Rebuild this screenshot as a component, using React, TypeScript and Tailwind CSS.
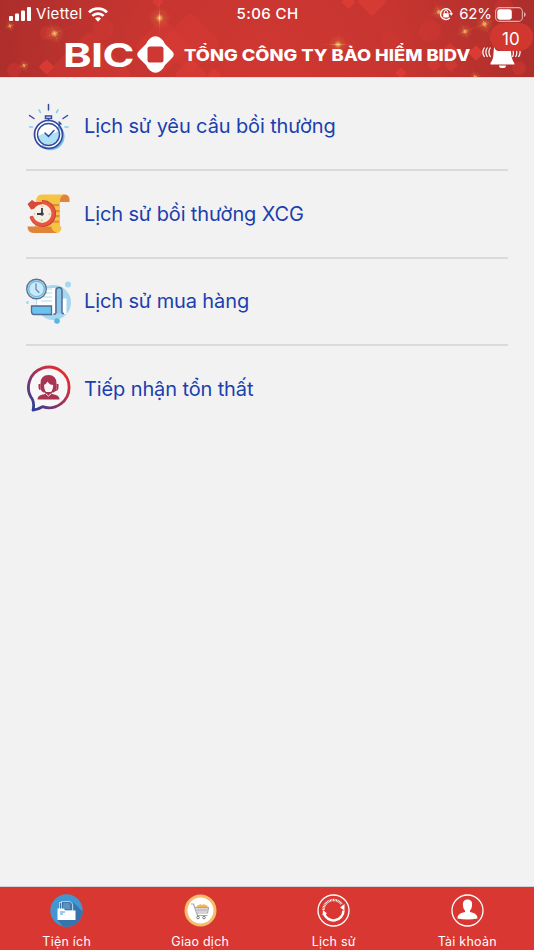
import type { ReactNode } from 'react';

const sparkles = [
  { x: 10, y: 26, r: 10 },
  { x: 54.5, y: 33.5, r: 20 },
  { x: 159.5, y: 18, r: 22 },
  { x: 24, y: 65.5, r: 11 },
  { x: 338, y: 44.5, r: 20 },
  { x: 465, y: 31.5, r: 15 },
  { x: 484.5, y: 24, r: 18 },
  { x: 439, y: 12, r: 15 },
  { x: 475, y: 77, r: 11 },
];

const HeaderBackground = () => (
  <svg className="absolute inset-0 h-full w-full" viewBox="0 0 534 77" preserveAspectRatio="none">
    <defs>
      <radialGradient id="bg" gradientUnits="userSpaceOnUse" cx="267" cy="75" r="290">
        <stop offset="0" stopColor="#d03732" />
        <stop offset="0.5" stopColor="#c63530" />
        <stop offset="1" stopColor="#a92d2b" />
      </radialGradient>
      <radialGradient id="glow">
        <stop offset="0" stopColor="#ffe9a0" />
        <stop offset="0.13" stopColor="#f0b660" stopOpacity="0.85" />
        <stop offset="0.4" stopColor="#d9713f" stopOpacity="0.3" />
        <stop offset="1" stopColor="#d9713f" stopOpacity="0" />
      </radialGradient>
    </defs>
    <rect width="534" height="77" fill="url(#bg)" />
    <g fill="#de3d36">
      <rect x="-31" y="-31" width="62" height="62" rx="6" opacity="0.35" transform="translate(89 74) rotate(45)" />
      <rect x="-22" y="-22" width="44" height="44" rx="5" opacity="0.35" transform="translate(190 43) rotate(45)" />
      <rect x="-20" y="-20" width="40" height="40" rx="4" opacity="0.35" transform="translate(163 46) rotate(45)" />
      <rect x="-12" y="-12" width="24" height="24" rx="4" opacity="0.5" transform="translate(191 75) rotate(45)" />
      <rect x="-5" y="-5" width="10" height="10" rx="1" opacity="0.7" transform="translate(214 75) rotate(45)" />
      <rect x="-5.5" y="-5.5" width="11" height="11" rx="1" opacity="0.8" transform="translate(46.5 67) rotate(45)" />
      <rect x="-4" y="-4" width="8" height="8" rx="1" opacity="0.7" transform="translate(158 2) rotate(45)" />
      <rect x="-5" y="-5" width="10" height="10" rx="1" opacity="0.8" transform="translate(348.5 2) rotate(45)" />
      <rect x="-11" y="-11" width="22" height="22" rx="3" opacity="0.6" transform="translate(372 1) rotate(45)" />
      <rect x="-5.5" y="-5.5" width="11" height="11" rx="1" opacity="0.9" transform="translate(476 53) rotate(45)" />
      <rect x="-4" y="-4" width="8" height="8" rx="1" opacity="0.8" transform="translate(401 73) rotate(45)" />
      <rect x="-5" y="-5" width="10" height="10" rx="1" opacity="0.5" transform="translate(434 65) rotate(45)" />
      <rect x="-5" y="-5" width="10" height="10" rx="1" opacity="0.5" transform="translate(451 65) rotate(45)" />
      <rect x="-6" y="-6" width="12" height="12" rx="1" opacity="0.6" transform="translate(450 51) rotate(45)" />
      <circle cx="103" cy="29" r="11" opacity="0.25" />
      <circle cx="47" cy="33" r="7" opacity="0.35" />
      <circle cx="14" cy="70" r="7" opacity="0.35" />
      <circle cx="430" cy="31" r="11" opacity="0.25" />
      <circle cx="519" cy="68" r="7" opacity="0.4" />
      <circle cx="390" cy="40" r="9" opacity="0.2" />
      <circle cx="504" cy="8" r="10" opacity="0.25" />
    </g>
    {sparkles.map(s => (
      <g key={`${s.x}-${s.y}`} transform={`translate(${s.x} ${s.y})`}>
        <circle r={s.r * 0.5} fill="url(#glow)" />
        <g transform={s.x === 159.5 || s.x === 338 ? undefined : 'rotate(-22)'} fill="url(#glow)" opacity="0.8">
          <ellipse rx={s.r} ry="0.8" />
          <ellipse rx="0.8" ry={s.r} />
        </g>
      </g>
    ))}
  </svg>
);

const StatusBar = () => (
  <div className="relative flex h-7 items-center pr-2 pl-[9px] text-[15px] text-white">
    <div className="flex flex-1 items-center">
      <svg width="22" height="14" viewBox="0 0 22 14" fill="#fff">
        <rect x="0" y="9" width="4" height="5" rx="1" />
        <rect x="6" y="6.5" width="4" height="7.5" rx="1" />
        <rect x="12" y="3.5" width="4" height="10.5" rx="1" />
        <rect x="18" y="0" width="4" height="14" rx="1" />
      </svg>
      <span className="ml-[5px] w-[47px] tracking-[0.3px] whitespace-nowrap">Viettel</span>
      <svg className="ml-[5px]" width="20" height="15" viewBox="0 0 20 15">
        <g fill="none" stroke="#fff" strokeWidth="2.7">
          <path d="M1 5.4a12.6 12.6 0 0 1 18 0" />
          <path d="M4.4 8.9a7.8 7.8 0 0 1 11.2 0" />
        </g>
        <path d="M7 11.6a4.2 4.2 0 0 1 6 0L10 14.7Z" fill="#fff" />
      </svg>
    </div>
    <span className="text-[15px] font-medium tracking-[0.4px]">5:06 CH</span>
    <div className="flex flex-1 items-center justify-end">
      <svg width="14" height="14" viewBox="0 0 14 14" fill="none" stroke="#fff" strokeWidth="1.3">
        <path d="M10.8 11A5.4 5.4 0 1 1 12.4 7" />
        <path d="m10.2 6.2 2.2 2.6 1.6-2.6Z" fill="#fff" stroke="none" />
        <rect x="4.2" y="6.2" width="5.6" height="4.2" rx="0.6" fill="#fff" stroke="none" />
        <path d="M5.3 6.5V5.2a1.7 1.7 0 0 1 3.4 0v1.3" strokeWidth="1" />
      </svg>
      <span className="ml-[6px] tracking-[-0.1px]">62%</span>
      <svg className="ml-[3px]" width="31" height="15" viewBox="0 0 31 15">
        <rect x="0.6" y="0.6" width="26.8" height="13.8" rx="4" fill="none" stroke="#e2aaa7" strokeWidth="1.1" />
        <rect x="2.3" y="2.3" width="14.5" height="10.4" rx="2.4" fill="#fff" />
        <path d="M29 5v5q1.7-.7 1.7-2.5T29 5Z" fill="#e2aaa7" />
      </svg>
    </div>
  </div>
);

const Bell = () => (
  <div className="relative ml-[10px] h-[49px] w-[46px] shrink-0">
    <div className="absolute top-[-5px] left-[10px] h-7 w-[43px] rounded-full bg-[#cf372f]" />
    <svg className="absolute top-[16px] left-[1px]" width="42" height="25" viewBox="0 0 42 25">
      <path d="M13 3q1 3 4 4h13q.200 8 3.300 12v1.500H9.500V19Q12.500 15 12.500 9Z" fill="#fff" />
      <path d="M18 21.500h7a3.500 2.600 0 0 1-7 0Z" fill="#fff" />
      <path
        d="M3.500 3.500Q.200 8 3.500 13M6.500 3.500Q3.200 8 6.500 13M9.500 3.500Q6.200 8 9.500 13M32 7q1 2.500-.500 6M35.500 7q1 3-1 6M39 7q.500 3-1.500 6"
        fill="none"
        stroke="#fff"
        strokeWidth="1.200"
      />
    </svg>
    <span className="absolute top-[1px] left-[22px] text-[17px] leading-5 text-white">10</span>
  </div>
);

const Header = () => (
  <header className="relative h-[77px] shrink-0 overflow-hidden">
    <HeaderBackground />
    <StatusBar />
    <div className="relative flex h-[49px] items-center pl-16 text-white">
      <div className="w-[73px] shrink-0 pt-[4px]">
        <span className="-ml-px inline-block origin-left scale-x-[1.310] text-[33px] leading-[44px] font-bold tracking-[-0.5px]">
          BIC
        </span>
      </div>
      <svg className="mt-[3px] shrink-0" width="37" height="37" viewBox="0 0 37 37">
        <path
          fill="#fff"
          fillRule="evenodd"
          d="M13 2.500Q18.500-2 24 2.500Q26.500 4.500 28 8L35 15Q38.500 18.500 35 22L28 29Q26.500 32.500 24 34.500Q18.500 39 13 34.500Q10.500 32.500 9 29L2 22Q-1.500 18.500 2 15L9 8Q10.500 4.500 13 2.500ZM13 10.500Q10.500 10.500 10.500 13V24Q10.500 26.500 13 26.500H24Q26.500 26.500 26.500 24V13Q26.500 10.500 24 10.500Z"
        />
      </svg>
      <div className="ml-[10px] w-[286px] shrink-0 pt-[4px]">
        <span className="inline-block origin-left scale-x-[1.144] text-[16px] font-extrabold whitespace-nowrap">
          TỔNG CÔNG TY BẢO HIỂM BIDV
        </span>
      </div>
      <Bell />
    </div>
  </header>
);

const StopwatchIcon = () => (
  <svg width="46" height="50" viewBox="0 0 46 50" fill="none" strokeLinecap="round">
    <circle cx="22.500" cy="33.500" r="13.300" fill="#fff" />
    <path d="M12 35.500q5-5 11-2 6-1 10-4 1.500 2 1.500 4a11.500 11.500 0 0 1-22.500 2Z" fill="#aee0f5" />
    <path d="M33 26a12.500 12.500 0 0 1-16.500 19" stroke="#73c5ea" strokeWidth="2.500" />
    <circle cx="22.500" cy="33.500" r="14" stroke="#354a9f" strokeWidth="1.700" />
    <circle cx="22.500" cy="33.500" r="11" stroke="#354a9f" strokeWidth="1.400" />
    <path d="M19.500 15h6v2.500h-6ZM22.500 18v1.500M33 23.500l1-1M33 21l2 2M19 32l3.500 3.500 5.500-6" stroke="#354a9f" strokeWidth="1.500" />
    <path d="M22.500 3.500V9M3.500 14.500l4.500 3M41.500 14.500l-4.500 3" stroke="#354a9f" strokeWidth="1.500" />
    <path d="M13 9l1.500 2.500M32 9l-1.500 2.500M3.500 26h3M39 26h3" stroke="#7bd0ef" strokeWidth="1.500" />
  </svg>
);

const ScrollIcon = () => (
  <svg width="46" height="46" viewBox="0 0 46 46">
    <path d="M34 11V8q0-4.500 4.500-4.500T43.500 8v3Z" fill="#df8438" />
    <path d="M10 11q0-7.500 6-7.500h23q-5 1-5 6V35H10Z" fill="#f6c444" />
    <path d="M9 20h25v16q0 4-3.500 5H9Z" fill="#f6c444" />
    <path d="M27 13h6v2.300h-6ZM29 19h4.500v2.300H29ZM29 24h4.500v2.300H29ZM27 29.500h6v2.300h-6Z" fill="#e58b35" />
    <path d="M1.500 35.500h24q.500 4 4 5l3 1.500H7.500q-6 0-6-6.500Z" fill="#df8438" />
    <path d="M25.500 35.500q1 5 5.500 6.500 4.500-1 4.500-6.500Z" fill="#f6c444" />
    <path d="M5.500 25.500A11.500 11.500 0 1 0 16 11" fill="none" stroke="#cb4335" strokeWidth="4" />
    <path d="M16 11.500A11 11 0 1 1 5.500 25" fill="none" stroke="#e85643" strokeWidth="3.200" />
    <path d="M1.500 13 6 9l3 2h7v5L9 17.500l-4 1Z" fill="#d94939" />
    <circle cx="16" cy="22.500" r="9.200" fill="#f4eee4" />
    <path d="M16 17v6h-5" fill="none" stroke="#3b3c4c" strokeWidth="1.800" />
    <circle cx="16" cy="23" r="1.800" fill="#3b3c4c" />
    <path d="M16 14.500v1.500M16 28.500v1.500M22.500 23h1.500M8 23h1" stroke="#a7a7aa" strokeWidth="1" />
  </svg>
);

const ReceiptIcon = () => (
  <svg width="46" height="48" viewBox="0 0 46 48">
    <circle cx="27.500" cy="25.500" r="17.500" fill="#a5d8ef" />
    <circle cx="42" cy="7.500" r="3" fill="#a5d8ef" />
    <circle cx="1.500" cy="25.500" r="1.500" fill="#a5d8ef" />
    <circle cx="31" cy="44" r="2.800" fill="#55b7e6" />
    <path d="M12 11h17v26H10Z" fill="#fff" />
    <path d="M36 21.500h4.500v15.500H36Z" fill="#fff" />
    <path d="M18 12h8M20 16h6M18 20h8M15 24h11" stroke="#c5e7f4" strokeWidth="1.500" />
    <path d="M30 36.500V14q0-3.500 3-3.500t3 3.500v22.500" fill="#8cc8e9" stroke="#526b91" strokeWidth="1.500" />
    <path d="M27.500 37h2.500M36 36.500h2" stroke="#526b91" strokeWidth="1.300" />
    <path d="M5.500 29h20v8.500H8q-2.500 0-2.500-3Z" fill="#69c3ee" stroke="#526b91" strokeWidth="1.300" />
    <circle cx="10.500" cy="12" r="9.800" fill="#c9eafa" stroke="#61708c" strokeWidth="1.400" />
    <circle cx="10.500" cy="12" r="7.800" fill="none" stroke="#70bde2" strokeWidth="1.400" />
    <path d="M10 6.500v6l3.300 3.300" fill="none" stroke="#668aa9" strokeWidth="1.300" />
  </svg>
);

const SupportIcon = () => (
  <svg width="46" height="50" viewBox="0 0 46 50">
    <defs>
      <linearGradient id="support" x1="1" y1="0" x2="0" y2="1">
        <stop offset="0.08" stopColor="#ed2b2b" />
        <stop offset="0.5" stopColor="#9f345b" />
        <stop offset="0.95" stopColor="#283e9b" />
      </linearGradient>
    </defs>
    <path
      d="M6.500 35.500A20.300 20.300 0 1 1 16.500 42.700Q12 45.500 7 46 8.500 40.500 6.500 35.500Z"
      fill="#fff"
      fillOpacity="0.4"
      stroke="url(#support)"
      strokeWidth="2.800"
      strokeLinejoin="round"
    />
    <g fill="#aa3351">
      <path fillRule="evenodd" d="M14.500 24.500v-5q0-8.500 8-8.500t8 8.500v5q-.500 3-3 4h-10q-2.500-1-3-4Zm3.500-3.500q0 7 4.500 8 4.700-1 4.700-8-3.700 0-5.700-3.500-1 2-3.500 3.500Z" />
      <path d="M12.500 20h2v6h-1l-1-2ZM30.500 20h2v4l-1 2h-1Z" />
      <path d="M19 28h7v2l4 1q3.500 1 3.500 4.500h-22q0-3.500 3.500-4.500l4-1Z" />
    </g>
    <path d="m19.500 29.500 3 2.500 3-2.500" fill="none" stroke="#eee" strokeWidth="1" />
    <path d="M32 25q-1.500 2-6 2" fill="none" stroke="#aa3351" strokeWidth="1.200" />
  </svg>
);

const FolderIcon = () => (
  <svg width="33" height="33" viewBox="0 0 33 33">
    <defs>
      <clipPath id="disc">
        <circle cx="16.500" cy="16.500" r="16.200" />
      </clipPath>
    </defs>
    <g clipPath="url(#disc)">
      <path d="M0 0h33v33H0Z" fill="#4396d0" />
      <path d="m23 8 14 14v14H16l-8.500-10 17-5Z" fill="#3575ab" />
    </g>
    <path d="M9.500 8.500h10l2 2V17h-12Z" fill="#3575ab" stroke="#d9eefb" strokeWidth="0.800" />
    <path d="M11.500 7.500h8.500l2.500 2.500v7h-11Z" fill="#3c78a8" stroke="#d9eefb" strokeWidth="0.700" />
    <path d="M13.500 10h6M13 12h7M13 14h7" stroke="#a8d1ee" strokeWidth="0.600" />
    <path d="M7.500 14.500h6l2 2h10V26h-18Z" fill="#fff" />
    <path d="M10 18h5M10 20h3" stroke="#4a92c5" strokeWidth="1" />
  </svg>
);

const CartIcon = () => (
  <svg width="33" height="33" viewBox="0 0 33 33">
    <circle cx="16.500" cy="16.500" r="14.500" fill="#fff" stroke="#f4bd6a" strokeWidth="3" />
    <path d="M12.500 13q0-2 2.500-2 1-1.500 3 0 2-1.500 3.500 0 2.500 0 2 2Z" fill="#f3b64e" />
    <path d="M7 10h2.500l4 11.500h10M11 13.500h13.500l-1 5.500H13" fill="none" stroke="#aaa7ac" strokeWidth="1.200" />
    <path d="M12 14h12l-.800 4.500h-10Z" fill="#d6d4d8" />
    <path d="M12 16h12" stroke="#aaa7ac" strokeWidth="0.700" />
    <circle cx="14" cy="23.500" r="1.300" fill="none" stroke="#777" />
    <circle cx="20" cy="23.500" r="1.300" fill="none" stroke="#777" />
  </svg>
);

const HistoryIcon = () => (
  <svg width="33" height="33" viewBox="0 0 33 33" fill="none" stroke="#fff">
    <circle cx="16.500" cy="16.500" r="15.500" strokeWidth="1.300" />
    <path d="M6.500 16A10 10 0 0 1 24.500 10" strokeWidth="2.500" strokeDasharray="0.900 0.600" />
    <path d="M26.500 16.500A10 10 0 0 1 7 19.500" strokeWidth="2.500" />
    <path d="m23 13.500 4.500 3v-6.500ZM5.500 21.500l.500-5.500 4 3.500Z" fill="#fff" stroke="none" />
  </svg>
);

const AccountIcon = () => (
  <svg width="33" height="33" viewBox="0 0 33 33">
    <circle cx="16.500" cy="16.500" r="15.500" fill="none" stroke="#fff" strokeWidth="1.300" />
    <path d="M16.500 5.500c3.500 0 5 2.500 4.500 6-.300 3-1 4-2 5v1.500c3 .800 7.500 1.500 7.500 6.500q-10 2-20 0c0-5 4.500-5.700 7.500-6.500v-1.500c-1-1-1.700-2-2-5-.500-3.500 1-6 4.500-6Z" fill="#fff" />
  </svg>
);

const menuItems: { label: string; icon: ReactNode }[] = [
  { label: 'Lịch sử yêu cầu bồi thường', icon: <StopwatchIcon /> },
  { label: 'Lịch sử bồi thường XCG', icon: <ScrollIcon /> },
  { label: 'Lịch sử mua hàng', icon: <ReceiptIcon /> },
  { label: 'Tiếp nhận tổn thất', icon: <SupportIcon /> },
];

const tabs: { label: string; icon: ReactNode }[] = [
  { label: 'Tiện ích', icon: <FolderIcon /> },
  { label: 'Giao dịch', icon: <CartIcon /> },
  { label: 'Lịch sử', icon: <HistoryIcon /> },
  { label: 'Tài khoản', icon: <AccountIcon /> },
];

const App = () => {
  return (
    <div className="flex h-[950px] w-[534px] flex-col overflow-hidden bg-[#f2f2f2] font-['Inter','Noto_Sans',sans-serif]">
      <Header />
      <main className="flex-1 border-t border-[#dedede] px-[26px] pt-[5px]">
        {menuItems.map(item => (
          <div
            key={item.label}
            className="flex h-[87.800px] items-center border-b-2 border-[#dadada] last:border-transparent"
          >
            <div className="flex w-[46px] shrink-0 justify-center">{item.icon}</div>
            <span className="ml-3 text-[20px] tracking-[-0.120px] whitespace-nowrap text-[#1c3fae]">{item.label}</span>
          </div>
        ))}
      </main>
      <nav className="grid h-[64px] shrink-0 grid-cols-4 border-t border-[#d3d3d3] bg-[#d93732]">
        {tabs.map(tab => (
          <div key={tab.label} className="flex flex-col items-center pt-[7px] text-white">
            {tab.icon}
            <span className="mt-[6px] text-[12.500px] leading-[18px] tracking-[0.250px]">{tab.label}</span>
          </div>
        ))}
      </nav>
    </div>
  );
};

export default App;
